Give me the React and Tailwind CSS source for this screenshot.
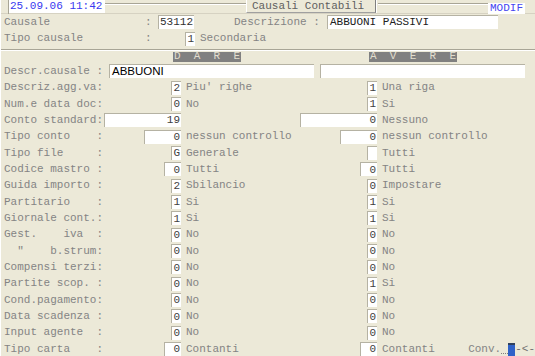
import React from "react";

const W = {
  1: "w-[10px]",
  2: "w-[17px]",
  3: "w-[37px]",
  4: "w-[77px]",
};

function Box({ v, w = 1 }) {
  return (
    <div
      className={`${W[w]} h-[14px] bg-white border-l border-t border-[#b5b2a3] flex items-center justify-end pr-[1px] text-[#404040]`}
    >
      {v}
    </div>
  );
}

const rows = [
  ["Descriz.agg.va:", "2", 1, "Piu' righe", "1", 1, "Una riga"],
  ["Num.e data doc:", "0", 1, "No", "1", 1, "Si"],
  ["Conto standard:", "19", 4, "", "0", 4, "Nessuno"],
  ["Tipo conto    :", "0", 3, "nessun controllo", "0", 3, "nessun controllo"],
  ["Tipo file     :", "G", 1, "Generale", "", 1, "Tutti"],
  ["Codice mastro :", "0", 2, "Tutti", "0", 2, "Tutti"],
  ["Guida importo :", "2", 1, "Sbilancio", "0", 1, "Impostare"],
  ["Partitario    :", "1", 1, "Si", "1", 1, "Si"],
  ["Giornale cont.:", "1", 1, "Si", "1", 1, "Si"],
  ["Gest.    iva  :", "0", 1, "No", "0", 1, "No"],
  ['  "    b.strum:', "0", 1, "No", "0", 1, "No"],
  ["Compensi terzi:", "0", 1, "No", "0", 1, "No"],
  ["Partite scop. :", "0", 1, "No", "1", 1, "Si"],
  ["Cond.pagamento:", "0", 1, "No", "0", 1, "No"],
  ["Data scadenza :", "0", 1, "No", "0", 1, "No"],
  ["Input agente  :", "0", 1, "No", "0", 1, "No"],
  ["Tipo carta    :", "0", 2, "Contanti", "0", 2, "Contanti"],
];

export default function App() {
  return (
    <div
      className="w-[535px] h-[356px] overflow-hidden bg-[#ece9d8] text-[11px] text-[#848484] border-l border-white"
      style={{ fontFamily: '"Liberation Mono", "Courier New", monospace' }}
    >
      {/* header */}
      <div className="flex items-start h-[14px] border-b border-[#d6d2c2]">
        <div className="w-[8px] h-[14px] border-r border-[#a8a596]" />
        <div className="w-[96px] h-[13px] bg-white text-[#3838f0] flex items-center pl-[1px] leading-none">
          25.09.06 11:42
        </div>
        <div className="w-[141px] mt-[3px] border-t border-[#a8a596] border-b border-b-white" />
        <div className="w-[130px] h-[13px] border-l border-white border-r border-r-[#808080] border-b border-b-[#a0a0a0] flex items-center pl-[5px] text-[#606060] leading-none">
          Causali Contabili
        </div>
        <div className="w-[2px] h-[13px] border-l border-white" />
        <div className="flex-1 mt-[3px] border-t border-[#a8a596] border-b border-b-white" />
        <div className="w-[37px] h-[11px] mt-[3px] bg-white text-[#4646f0] flex items-center pl-[2px] leading-none">
          MODIF
        </div>
        <div className="w-[10px]" />
      </div>

      {/* Causale */}
      <div className="flex items-center h-[16.35px]">
        <span className="pl-[3px] w-[144px] whitespace-pre">Causale</span>
        <span className="w-[13px]">:</span>
        <div className="w-[36px] h-[14px] bg-white border-l border-t border-[#b5b2a3] flex items-center pl-[1px] text-[#303030]">
          53112
        </div>
        <span className="pl-[40px] w-[133px] whitespace-pre">Descrizione :</span>
        <div className="w-[171px] h-[14px] bg-white border-l border-t border-[#b5b2a3] flex items-center pl-[2px] text-[#202020]">
          ABBUONI PASSIVI
        </div>
      </div>

      {/* Tipo causale */}
      <div className="flex items-center h-[16.35px]">
        <span className="pl-[3px] w-[144px] whitespace-pre">Tipo causale</span>
        <span className="w-[40px]">:</span>
        <Box v="1" />
        <span className="pl-[5px]">Secondaria</span>
      </div>

      {/* DARE / AVERE */}
      <div className="h-[16.35px] flex flex-col">
        <div className="mt-[2px] border-t border-[#a8a596] border-b border-b-white" />
        <div className="flex mt-[1px]">
          <div className="ml-[172px] w-[68px] h-[10px] bg-[#808080] text-[#e2dece] flex justify-between items-center leading-none px-[1px]">
            <span>D</span><span>A</span><span>R</span><span>E</span>
          </div>
          <div className="ml-[128px] w-[88px] h-[10px] bg-[#808080] text-[#e2dece] flex justify-between items-center leading-none px-[1px]">
            <span>A</span><span>V</span><span>E</span><span>R</span><span>E</span>
          </div>
        </div>
      </div>

      {/* Descr.causale */}
      <div className="flex items-center h-[16.35px]">
        <span className="pl-[3px] w-[108px] whitespace-pre">Descr.causale :</span>
        <div
          className="w-[205px] h-[14px] bg-white border-l border-t border-[#b5b2a3] flex items-center pl-[2px] text-black text-[11.5px]"
          style={{ fontFamily: '"Liberation Sans", Arial, sans-serif' }}
        >
          ABBUONI
        </div>
        <div className="w-[6px]" />
        <div className="w-[205px] h-[14px] bg-white border-l border-t border-[#b5b2a3]" />
      </div>

      {rows.map((r, i) => (
        <div key={i} className="flex items-center h-[16.35px]">
          <div className="w-[180px] flex items-center">
            <span className="pl-[3px] whitespace-pre">{r[0]}</span>
            <div className="flex-1" />
            <Box v={r[1]} w={r[2]} />
          </div>
          <div className="w-[196px] flex items-center">
            <span className="pl-[5px] whitespace-pre">{r[3]}</span>
            <div className="flex-1" />
            <Box v={r[4]} w={r[5]} />
          </div>
          <span className="pl-[5px] whitespace-pre">{r[6]}</span>
          {i === rows.length - 1 && (
            <div className="ml-auto flex items-center h-[16px]">
              <span>Conv.</span>
              <span className="w-[7px] h-[1px] mt-[8px] border-b border-dotted border-[#808080]" />
              <div className="w-[7px] h-[15px] mt-[2px] bg-[#2f62c8] border-t-2 border-[#30415e]" />
              <span className="text-[#707070] whitespace-pre">-&lt;-</span>
            </div>
          )}
        </div>
      ))}
    </div>
  );
}
